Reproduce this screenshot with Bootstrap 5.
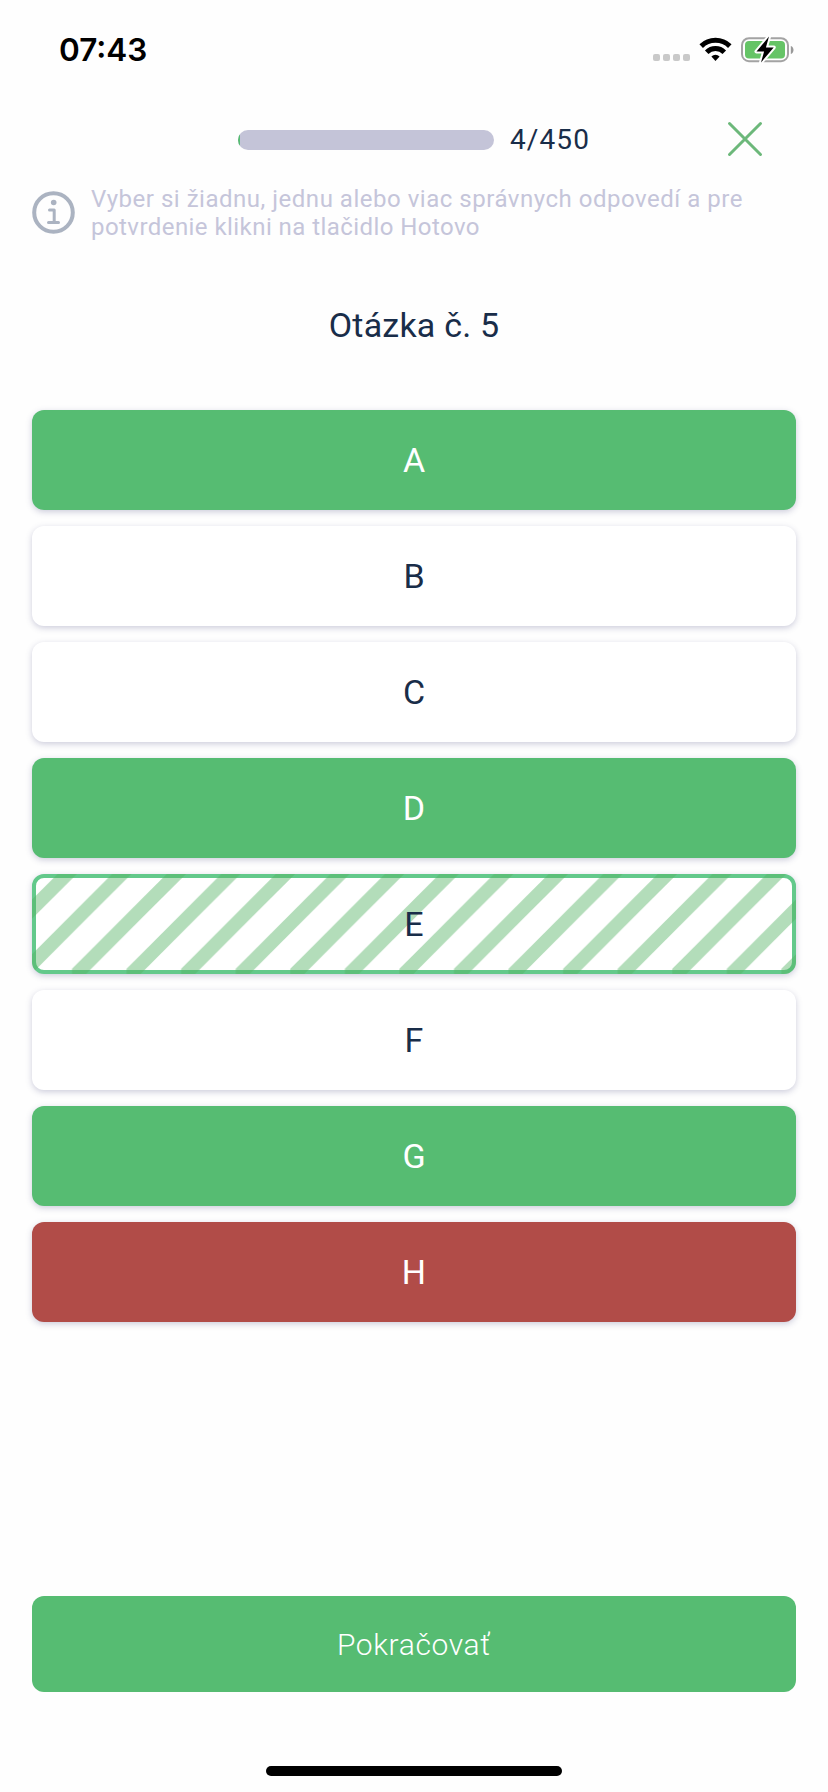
<!DOCTYPE html>
<html lang="sk">
<head>
<meta charset="utf-8">
<meta name="viewport" content="width=device-width, initial-scale=1">
<title>Otázka č. 5</title>
<link href="https://cdn.jsdelivr.net/npm/bootstrap@5.3.0/dist/css/bootstrap.min.css" rel="stylesheet">
<style>
  body { font-family: Roboto, "Liberation Sans", sans-serif; color: #192d49; background: #fefefe; }
  .screen { height: 1792px; padding: 0 32px 16px; }
  .status-bar { height: 98px; padding: 2px 0 0 27px; }
  .clock { font: 600 31.5px/1 Inter, sans-serif; color: #000; letter-spacing: 0; }
  .quiz-head { height: 84px; padding: 0 33px 0 206px; }
  .quiz-progress { width: 256px; height: 20px; border-radius: 10px; background: #c4c4d8; }
  .quiz-progress .progress-bar { background: #56bc72; }
  .counter { font-size: 28px; line-height: 1; margin-left: 16px; letter-spacing: 1.1px; }
  .close-btn { margin-bottom: 2px; }
  .hint { height: 60px; color: #c5c5da; font-size: 24px; line-height: 28px; gap: 16px; }
  .hint-text { padding-top: 2px; white-space: nowrap; }
  .hint-a { letter-spacing: .52px; }
  .hint-b { letter-spacing: .44px; }
  .question { font-size: 34px; line-height: 40px; margin-top: 63px; letter-spacing: .2px; }
  .answers { gap: 16px; margin-top: 65px; }
  .answer { height: 100px; border: 0; border-radius: 12px; background: #fff; color: #192d49; font-size: 34px; line-height: 1; box-shadow: 0 2px 6px rgba(60,60,120,.26); }
  .right { background: #56bc72; color: #fff; }
  .wrong { background: #b14c48; color: #fff; }
  .missed { border: 4px solid #63c98b; }
  .missed svg { position: absolute; left: -4px; top: -4px; }
  .next-btn { height: 96px; border: 0; border-radius: 12px; background: #56bc72; color: #fff; font-size: 30px; font-weight: 300; letter-spacing: .6px; }
  .home-bar { width: 296px; height: 10px; border-radius: 5px; background: #000; margin-top: 74px; }
</style>
</head>
<body>
<main class="screen d-flex flex-column overflow-hidden">
  <header class="status-bar d-flex align-items-center justify-content-between flex-shrink-0">
    <span class="clock">07:43</span>
    <svg width="144" height="32" viewBox="0 0 144 32">
      <g fill="#c9c9c9"><rect x="1" y="20" width="7" height="7" rx="2"/><rect x="11" y="20" width="7" height="7" rx="2"/><rect x="21" y="20" width="7" height="7" rx="2"/><rect x="31" y="20" width="7" height="7" rx="2"/></g>
      <g fill="none" stroke="#000" stroke-width="5"><path d="M49.2 12.1a20.5 20.5 0 0 1 28.6 0"/><path d="M54.7 18.2a12.6 12.6 0 0 1 17.6 0"/></g>
      <path d="M59.4 22.4a6 6 0 0 1 8.2 0L63.5 27z"/>
      <rect x="90" y="4.2" width="46" height="23" rx="7" fill="none" stroke="#a3a3a3" stroke-width="2"/>
      <rect x="93" y="7" width="40" height="17.5" rx="4" fill="#65c466"/>
      <path d="M138.800 12v8c3.600-1 3.600-7 0-8z" fill="#999"/>
      <path d="M117 2.600 104.500 17.500h7.600L109 28.500 121.700 13.400h-7.800z" fill="#000" stroke="#fff" stroke-width="4" stroke-linejoin="round" paint-order="stroke"/>
    </svg>
  </header>

  <div class="quiz-head d-flex align-items-center flex-shrink-0">
    <div class="progress quiz-progress"><div class="progress-bar" style="width:.89%"></div></div>
    <span class="counter">4/450</span>
    <button class="btn close-btn p-0 border-0 ms-auto lh-1" aria-label="Zavrieť">
      <svg width="36" height="36" viewBox="0 0 36 36" fill="none" stroke="#6cb87a" stroke-width="3" stroke-linecap="round"><path d="M2.500 2.500l31 31M33.500 2.500l-31 31"/></svg>
    </button>
  </div>

  <div class="hint d-flex align-items-center flex-shrink-0">
    <svg class="flex-shrink-0" width="43" height="43" viewBox="0 0 43 43" fill="none" stroke="#abb3c1"><circle cx="21.500" cy="21.500" r="19.300" stroke-width="4"/><circle cx="21.700" cy="11.500" r="2.800" fill="#abb3c1" stroke="none"/><path d="M17.500 19h4.700v12.500M16.500 31.500h10" stroke-width="3" stroke-linecap="round" stroke-linejoin="round"/></svg>
    <div class="hint-text"><span class="hint-a">Vyber si žiadnu, jednu alebo viac správnych odpovedí a pre</span><br><span class="hint-b">potvrdenie klikni na tlačidlo Hotovo</span></div>
  </div>

  <h1 class="question text-center fw-normal mb-0">Otázka č. 5</h1>

  <div class="answers d-flex flex-column">
    <button class="btn answer right">A</button>
    <button class="btn answer">B</button>
    <button class="btn answer">C</button>
    <button class="btn answer right">D</button>
    <button class="btn answer missed position-relative">
      <svg width="764" height="100" aria-hidden="true">
        <defs>
          <path id="band" d="M40 100V94.700L134.700 0H154L54 100z"/>
          <pattern id="bands" width="54.570" height="100" patternUnits="userSpaceOnUse">
            <g fill="#53b262"><use href="#band" x="0"/><use href="#band" x="-54.570"/><use href="#band" x="-109.140"/></g>
          </pattern>
        </defs>
        <rect width="764" height="100" rx="12" fill="url(#bands)" opacity=".44"/>
      </svg>
      <span class="position-relative">E</span>
    </button>
    <button class="btn answer">F</button>
    <button class="btn answer right">G</button>
    <button class="btn answer wrong">H</button>
  </div>

  <button class="btn next-btn mt-auto flex-shrink-0">Pokračovať</button>
  <div class="home-bar mx-auto flex-shrink-0"></div>
</main>
<script src="https://cdn.jsdelivr.net/npm/bootstrap@5.3.0/dist/js/bootstrap.bundle.min.js"></script>
</body>
</html>
